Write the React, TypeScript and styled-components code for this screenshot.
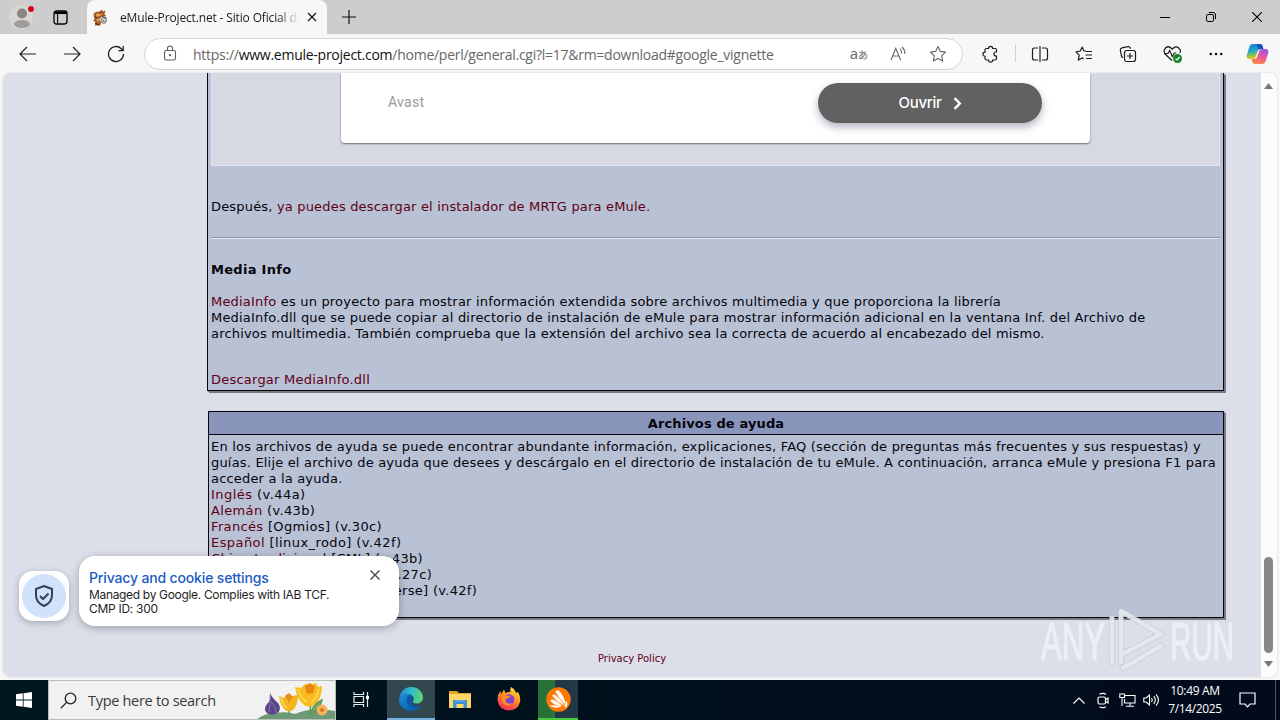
import React from "react";
import styled, { createGlobalStyle } from "styled-components";

const App = () => {
  return (
    <Screen>
      <GlobalStyle />
      <TabBar>
        <Profile>
          <svg width="26" height="26" viewBox="0 0 26 26">
            <circle cx="12" cy="13" r="12" fill="#d8d6d4" />
            <circle cx="13" cy="9.5" r="5" fill="#8b8683" />
            <ellipse cx="13" cy="20" rx="8" ry="4" fill="#a09c9a" />
            <circle cx="22" cy="5" r="3.6" fill="#d9dfe2" />
            <circle cx="22" cy="5" r="3" fill="#d2061c" />
          </svg>
        </Profile>
        <TabActions>
          <svg width="15" height="15" viewBox="0 0 15 15">
            <rect x="1" y="1" width="13" height="13" rx="2.4" fill="none" stroke="#000" strokeWidth="1.3" />
            <path d="M4.6 4v10" stroke="#000" strokeWidth="1.1" />
            <path d="M1.5 1.5h12v2.500h-12z" />
          </svg>
        </TabActions>
        <Tab>
          <svg width="15" height="17" viewBox="0 0 15 17">
            <path d="M1 4l3-1.500 2 .5 3-2.500.5 2 3-1-1 3.500 1.500 2-4.500 1-2.500 3 2 2-.5 3.500L2 16.500l.5-3.500-2-1 1-3-1-2z" fill="#a85a22" />
            <path d="M3 5l4-1 2.500 1-3 2-3 1zM3 10l3-1-1 5z" fill="#e9a45c" />
            <path d="M2 14.500l4 1M8 2.500L6 5M2 8l3 1" stroke="#4c210a" fill="none" />
            <circle cx="10.700" cy="11.500" r="2.800" fill="#d8d5cf" stroke="#6b6763" />
            <path d="M9.500 7.500l4 1.500M9.500 11.500l2 1" stroke="#46392f" fill="none" />
          </svg>
          <TabTitle>eMule-Project.net - Sitio Oficial de</TabTitle>
          <svg width="10" height="10" viewBox="0 0 10 10">
            <path d="M1 1l8 8M9 1L1 9" stroke="#111" strokeWidth="1.2" />
          </svg>
        </Tab>
        <NewTab>
          <svg width="14" height="14" viewBox="0 0 14 14">
            <path d="M7 0v14M0 7h14" stroke="#111" strokeWidth="1.2" />
          </svg>
        </NewTab>
        <WindowButtons>
          <svg width="10" height="10" viewBox="0 0 10 10">
            <path d="M0 5.5h10" stroke="#000" />
          </svg>
          <svg width="10" height="10" viewBox="0 0 10 10" fill="none" stroke="#000">
            <rect x=".5" y="2.5" width="7" height="7" rx="1.4" />
            <path d="M2.8.5H7Q9.500.5 9.500 3v4.200" />
          </svg>
          <svg width="10" height="10" viewBox="0 0 10 10">
            <path d="M0 0l10 10M10 0L0 10" stroke="#000" strokeWidth="1.1" />
          </svg>
        </WindowButtons>
      </TabBar>

      <Toolbar>
        <NavIcons>
          <svg width="18" height="16" viewBox="0 0 18 16" fill="none" stroke="#222" strokeWidth="1.2">
            <path d="M17 8H1.500M8 1L1 8l7 7" />
          </svg>
          <svg width="18" height="16" viewBox="0 0 18 16" fill="none" stroke="#222" strokeWidth="1.2">
            <path d="M1 8h15.500M10 1l7 7-7 7" />
          </svg>
          <svg width="18" height="18" viewBox="0 0 18 18" fill="none" stroke="#222" strokeWidth="1.3">
            <path d="M16.500 9A7.500 7.500 0 1 1 14.300 3.700L16 5.500M16.200 1v4.700h-4.700" />
          </svg>
        </NavIcons>
        <AddressBar>
          <svg width="14" height="17" viewBox="0 0 14 17" fill="none" stroke="#5f5f5f" strokeWidth="1.1">
            <rect x="1.500" y="5.500" width="11" height="9.500" rx="1.800" />
            <path d="M4.500 5.500V3.500a2.500 2.500 0 0 1 5 0v2" />
            <circle cx="7" cy="10.200" r=".6" fill="#5f5f5f" />
          </svg>
          <Url>
            https://<b>www.emule-project.com</b>/home/perl/general.cgi?l=17&amp;rm=download#google_vignette
          </Url>
          <AddressIcons>
            <Translate>
              a<small>あ</small>
            </Translate>
            <svg width="17" height="16" viewBox="0 0 17 16" fill="none" stroke="#666" strokeWidth="1.1">
              <path d="M1 14L5.800 2.500 10.600 14M2.700 10h6.200M10 2.500q1.800 2 1.500 5M12.200 1q3 3 2.700 7" />
            </svg>
            <svg width="18" height="18" viewBox="0 0 18 18" fill="none" stroke="#666" strokeWidth="1.100">
              <path d="M9 1.500l2.300 4.900 5.200.7-3.800 3.700 1 5.300L9 13.500l-4.700 2.600 1-5.300L1.500 7.100l5.200-.7z" strokeLinejoin="round" />
            </svg>
          </AddressIcons>
        </AddressBar>
        <ToolIcons>
          <svg width="18" height="18" viewBox="0 0 18 18" fill="none" stroke="#1c1c1c" strokeWidth="1.200">
            <path d="M3 5Q3 3.500 4.500 3.500H6.500a2.100 2.100 0 1 1 4.200 0H13q1.500 0 1.500 1.500v2H14a2 2 0 1 0 0 4h.5v2.500q0 1.500-1.500 1.500h-2.300a2.100 2.100 0 1 1-4.200 0H4.500Q3 15 3 13.500V11.300a2.100 2.100 0 1 1 0-4.200z" />
          </svg>
          <Separator />
          <svg width="18" height="18" viewBox="0 0 18 18" fill="none" stroke="#1c1c1c" strokeWidth="1.200">
            <path d="M7 3H3.500Q1.500 3 1.500 5v8q0 2 2 2H7M11 3h3.500q2 0 2 2v8q0 2-2 2H11M9 1v16" />
          </svg>
          <svg width="18" height="18" viewBox="0 0 18 18" fill="none" stroke="#1c1c1c" strokeWidth="1.200">
            <path d="M11 6L9 6 7.200 2 5.300 6 1 6.800l3.200 3.300-.8 5 3.800-2.200 1.500.8M11 6.500h6M10.500 10h6.500M11 13.500h6" strokeLinejoin="round" />
          </svg>
          <svg width="18" height="18" viewBox="0 0 18 18" fill="none" stroke="#1c1c1c" strokeWidth="1.200">
            <rect x="5.500" y="5.500" width="11" height="11" rx="2.200" />
            <path d="M11 8v6M8 11h6M4 12.500L2.700 11.800 1.300 5.500q-.3-2 1.600-2.600l6-1.300q1.600-.2 2.300 1.200l.3.900" />
          </svg>
          <svg width="20" height="18" viewBox="0 0 20 18" fill="none" stroke="#1c1c1c" strokeWidth="1.200">
            <path d="M9 15.500L2 9Q0 5.500 2.500 3T8 3l1.200 1.200L10.500 3Q13 .8 15.700 3t1.200 5M1 8.500h4l1.700-3 2.600 6 2-3.500h2" />
            <circle cx="14.500" cy="13.500" r="4.500" fill="#18832a" stroke="none" />
            <path d="M12.500 13.700l1.500 1.300 2.600-3" stroke="#fff" />
          </svg>
          <svg width="14" height="4" viewBox="0 0 14 4">
            <circle cx="1.800" cy="2" r="1.200" />
            <circle cx="7" cy="2" r="1.200" />
            <circle cx="12.200" cy="2" r="1.200" />
          </svg>
        </ToolIcons>
        <Copilot>
          <svg width="23" height="22" viewBox="0 0 23 22">
            <defs>
              <linearGradient id="cpA" x1="0" y1="0" x2="0.200" y2="1">
                <stop offset="0" stopColor="#1279d8" />
                <stop offset=".5" stopColor="#25a6c9" />
                <stop offset=".8" stopColor="#8bc548" />
                <stop offset="1" stopColor="#f2c51c" />
              </linearGradient>
              <linearGradient id="cpB" x1=".7" y1="0" x2=".3" y2="1">
                <stop offset="0" stopColor="#a253e0" />
                <stop offset=".5" stopColor="#ef5796" />
                <stop offset="1" stopColor="#fb8a44" />
              </linearGradient>
            </defs>
            <path d="M7 1h7q2 0 2.600 2l.8 3h-3q-2 0-2.700 2.200L9.700 14Q9 16 7 16H3.500Q0 16 .8 12L3.300 4Q4.200 1 7 1z" fill="url(#cpA)" />
            <path d="M14 1q2 0 2.600 2l.8 3h-3q-1 0-1.800.7L11.300 3Q10.800 1 9.500 1z" fill="#1456b8" />
            <path d="M16 21H9q-2 0-2.600-2l-.8-3H8.500q2 0 2.700-2.200L13.300 8Q14 6 16 6h3.500q3.500 0 2.700 4l-2.500 8q-.9 3-3.700 3z" fill="url(#cpB)" />
          </svg>
        </Copilot>
      </Toolbar>

      <Viewport>
        <Page>
          <Panel>
            <AdSlot>
              <AdCard>
                <Advertiser>Avast</Advertiser>
                <OpenButton>
                  Ouvrir
                  <svg width="9" height="13" viewBox="0 0 9 13" fill="none" stroke="#fff" strokeWidth="2.400">
                    <path d="M1.500 1.200l5.300 5.300-5.300 5.300" />
                  </svg>
                </OpenButton>
              </AdCard>
            </AdSlot>
            <Download $ls={0.18}>
              Después, <a>ya puedes descargar el instalador de MRTG para eMule.</a>
            </Download>
            <Rule />
            <Heading $ls={0.3}>Media Info</Heading>
            <Line $ls={0.195}>
              <a>MediaInfo</a> es un proyecto para mostrar información extendida sobre archivos multimedia y que proporciona la librería
            </Line>
            <Line $ls={0.195}>
              MediaInfo.dll que se puede copiar al directorio de instalación de eMule para mostrar información adicional en la ventana Inf. del Archivo de
            </Line>
            <Line $ls={0.18}>
              archivos multimedia. También comprueba que la extensión del archivo sea la correcta de acuerdo al encabezado del mismo.
            </Line>
            <DllLink $ls={0.23}>
              <a>Descargar MediaInfo.dll</a>
            </DllLink>
          </Panel>

          <HelpPanel>
            <PanelTitle>Archivos de ayuda</PanelTitle>
            <HelpBody>
              <Line $ls={0.2}>
                En los archivos de ayuda se puede encontrar abundante información, explicaciones, FAQ (sección de preguntas más frecuentes y sus respuestas) y
              </Line>
              <Line $ls={0.185}>
                guías. Elije el archivo de ayuda que desees y descárgalo en el directorio de instalación de tu eMule. A continuación, arranca eMule y presiona F1 para
              </Line>
              <Line $ls={0.18}>acceder a la ayuda.</Line>
              {helpFiles.map((file) => (
                <Line key={file.name} $ls={file.spacing}>
                  <a>{file.name}</a> {file.info}
                </Line>
              ))}
            </HelpBody>
          </HelpPanel>
          <Policy>Privacy Policy</Policy>

          <Watermark width="204" height="64" viewBox="0 0 204 64">
            <g fill="#f1f2f7" fillOpacity=".85" stroke="#f1f2f7" strokeOpacity=".8" strokeWidth="1.200" fontFamily="'Liberation Sans Narrow', 'Liberation Sans', sans-serif" fontSize="53">
              <text x="4" y="52" textLength="64" lengthAdjust="spacingAndGlyphs">ANY</text>
              <text x="133" y="52" textLength="64" lengthAdjust="spacingAndGlyphs">RUN</text>
            </g>
            <g fill="none" strokeLinecap="round" strokeLinejoin="round">
              <path d="M75 10v44M84 54V3l39 23M84 17v30l40-21M86 60l38-22" stroke="#b9bdcc" strokeWidth="6" opacity=".6" />
              <path d="M75 10v44M84 54V3l39 23M84 17v30l40-21M86 60l38-22" stroke="#eceef4" strokeWidth="4.500" opacity=".8" />
            </g>
          </Watermark>
        </Page>
        <Scrollbar>
          <svg width="9" height="6" viewBox="0 0 9 6">
            <path d="M4.500 0L9 6H0z" fill="#777" />
          </svg>
          <Thumb />
          <svg width="9" height="6" viewBox="0 0 9 6">
            <path d="M4.500 6L0 0h9z" fill="#777" />
          </svg>
        </Scrollbar>

        <Consent>
          <ShieldButton>
            <span>
              <svg width="20" height="24" viewBox="0 0 20 24" fill="none" stroke="#34434f" strokeWidth="2">
                <path d="M10 2l8 3v6.500Q18 18.500 10 22 2 18.500 2 11.500V5z" />
                <path d="M6 12l3 3 5.500-5.500" />
              </svg>
            </span>
          </ShieldButton>
          <ConsentCard>
            <div>
              <ConsentTitle>Privacy and cookie settings</ConsentTitle>
              <ConsentText $ls={-0.33}>Managed by Google. Complies with IAB TCF.</ConsentText>
              <ConsentText $ls={-0.28}>CMP ID: 300</ConsentText>
            </div>
            <svg width="10" height="10" viewBox="0 0 10 10">
              <path d="M.5.5l9 9M9.500.5l-9 9" stroke="#444" strokeWidth="1.400" />
            </svg>
          </ConsentCard>
        </Consent>
      </Viewport>

      <Taskbar>
        <Start>
          <svg width="16" height="16" viewBox="0 0 16 16" fill="#fff">
            <path d="M0 2.300L6.800 1.300v6.300H0zM7.600 1.200L16 0v7.600H7.600zM0 8.400h6.800v6.300L0 13.700zM7.600 8.400H16V16l-8.400-1.200z" />
          </svg>
        </Start>
        <Search>
          <svg width="17" height="17" viewBox="0 0 17 17" fill="none" stroke="#222" strokeWidth="1.300">
            <circle cx="10.500" cy="6.500" r="5.300" />
            <path d="M6.600 10.400L.8 16.200" />
          </svg>
          <span>Type here to search</span>
          <Flowers width="78" height="38" viewBox="0 0 78 38">
            <path d="M0 38q8-6 18-6 12-2 20 1 16-7 40-3v8z" fill="#6d9a76" />
            <path d="M32 34q0-6-1-10M53 34q0-6 1-12M54 32q2-9 11-13-2 9-11 14z" stroke="#5c9a5a" strokeWidth="1.500" fill="#6fae62" />
            <path d="M13 11q1 5 8 11 5 7-2 11-9 2-11-4 0-5 4-8 2-4 1-10z" fill="#5b4586" />
            <path d="M13 14q1 8-1 17M14 21q5 4 5 11" stroke="#8a72b0" fill="none" />
            <path d="M22 15l5 2 3-4 5 2 6-1q0 10-5 15-5 3-9-1-4-5-5-13z" fill="#f4b41c" />
            <path d="M28 15l4-3 4 4-4 6z" fill="#e98c18" />
            <path d="M38 6l6 1 4-4 5 1 6-2 2 4 4-1q0 12-7 18-5 5-11 1-7-6-9-18z" fill="#f9bc1e" />
            <path d="M48 5l5-3 5 4-2 6-6 1z" fill="#e88614" />
            <path d="M41 8q3 10 9 13M62 8q-2 9-8 14M24 17q2 7 6 10" stroke="#ffda50" strokeWidth="1.600" fill="none" />
            <circle cx="65" cy="29" r="5.500" fill="#f3b25a" />
            <circle cx="65" cy="29" r="2" fill="#d5741e" />
          </Flowers>
        </Search>
        <TaskButton>
          <svg width="17" height="17" viewBox="0 0 17 17" fill="none" stroke="#e8eef0" strokeWidth="1.200">
            <path d="M1 1v2.500h9.500V1M1 16v-2.500h9.500V16M1 5.500h9.500v6H1zM14.500 1v15" />
            <path d="M13 5h3v3h-3z" fill="#fff" stroke="none" />
          </svg>
        </TaskButton>
        <TaskButton $bg="#33474f" $line="#76b0e0" $width={48}>
          <svg width="24" height="24" viewBox="0 0 24 24">
            <defs>
              <linearGradient id="edgeTop" x1="0" y1=".4" x2="1" y2=".5">
                <stop offset="0" stopColor="#2487d5" />
                <stop offset=".5" stopColor="#31bdd0" />
                <stop offset="1" stopColor="#63d56b" />
              </linearGradient>
              <linearGradient id="edgeLow" x1="0" y1="0" x2="1" y2="1">
                <stop offset="0" stopColor="#1a92db" />
                <stop offset="1" stopColor="#0b4f9f" />
              </linearGradient>
            </defs>
            <path d="M.3 11C1 4.500 6 0 12 0c7 0 12 5 12 10.500 0 4-3 6-6.500 6-3 0-4-1.200-3.600-2 .7-1 1-1.700.8-3C14.300 8.500 11 6.500 7.500 7 4 7.200 1.500 9 .3 11z" fill="url(#edgeTop)" />
            <path d="M.2 11.500C1.500 7.500 7.500 5.200 11.500 8 7.500 9 6.700 14 9.500 17.500c3 3.500 8.500 3.500 12.700.8C20 22 16 24 12 24 5 24-.5 18.500.2 11.500z" fill="url(#edgeLow)" />
            <path d="M11.500 8C7 9 6.500 14.500 9.500 18c3 3.300 8.500 3.300 12.700.3-4 1.500-9.500.5-9.900-3.800-.1-1.700 1-2 1.300-3.500.2-1.500-.8-2.500-2.100-3z" fill="#0d59a9" />
          </svg>
        </TaskButton>
        <TaskButton $width={49}>
          <svg width="22" height="19" viewBox="0 0 22 19">
            <path d="M0 1h8l2 2h12v15H0z" fill="#e6a326" />
            <path d="M0 4h22v14H0z" fill="#fbd769" />
            <path d="M4 18v-8h14v8h-3.500v-4h-7v4z" fill="#3e91d1" />
            <path d="M6 11h10" stroke="#78bbe8" />
          </svg>
        </TaskButton>
        <TaskButton $width={49}>
          <svg width="24" height="24" viewBox="0 0 24 24">
            <defs>
              <linearGradient id="fox" x1=".8" y1="0" x2=".3" y2="1">
                <stop offset="0" stopColor="#ffe43a" />
                <stop offset=".45" stopColor="#ff9123" />
                <stop offset="1" stopColor="#f4245c" />
              </linearGradient>
            </defs>
            <path d="M14 0q4 2 5 6l2-1q3 5 2 10-2 8-11 8.500Q2 23 .6 13.500 0 8 3.500 4l.7 3L7 2.500 8.500 6q3-1.500 5-1-.7-3 .5-5z" fill="url(#fox)" />
            <circle cx="12" cy="12.500" r="5.300" fill="#7d45d0" />
            <path d="M5 9q3-2 6 0l3-.3-2.500 2.500Q8 11 8.500 14q1.500 4 6.500 2-2 4-7 2.200Q4 15 5 9z" fill="#ff8b25" />
          </svg>
        </TaskButton>
        <TaskButton $bg="linear-gradient(90deg, #28723a 43%, #233846 43%)" $line="#49c93e" $width={40} $gap={5}>
          <svg width="25" height="25" viewBox="0 0 25 25">
            <circle cx="12.500" cy="12.500" r="12.200" fill="#ff7800" />
            <path
              d="M9.500 4.500q2.500-2 4.500.5 4 5 5.500 12.500Q13 11 9.500 4.500zM6.500 8.800q.5-2 3-.5 5 4 8.500 9.700Q10 14 6.500 8.800zM4.700 14q0-2 2.800-1 4.500 2 8.500 5.700Q7.500 18 4.700 14zM4 18.500q4-.5 10.500 1Q9 22 4 18.500zM18.500 19.500q1.700-2.500 1.700-5.500 2 3 0 6z"
              fill="#fff"
              stroke="#fff"
              strokeWidth=".5"
            />
          </svg>
        </TaskButton>
        <Tray>
          <TrayIcon>
            <svg width="12" height="7" viewBox="0 0 12 7" fill="none" stroke="#fff" strokeWidth="1.200">
              <path d="M.5 6.500L6 1l5.500 5.500" />
            </svg>
          </TrayIcon>
          <TrayIcon>
            <svg width="12" height="17" viewBox="0 0 12 17" fill="none" stroke="#fff" strokeWidth="1.200">
              <rect x="1" y="5" width="7.500" height="7" rx="1.500" />
              <path d="M8.500 7.500L11 6v5L8.500 9.500M2.500 2.300q3-2 6.500 0M2.500 14.700q3 2 6.500 0" />
            </svg>
          </TrayIcon>
          <TrayIcon>
            <svg width="17" height="14" viewBox="0 0 17 14" fill="none" stroke="#fff" strokeWidth="1.100">
              <path d="M6 2.500h10v7.500H5.500V6M11 10v3M7 13.200h8M.8 1h4.700v3.500H.8zM3 4.500V13" />
            </svg>
          </TrayIcon>
          <TrayIcon>
            <svg width="17" height="14" viewBox="0 0 17 14" fill="none" stroke="#fff" strokeWidth="1.100">
              <path d="M.8 5v4h2.400l3.300 3V2L3.200 5zM8.500 5q1.400 2 0 4M10.800 3.200q3 3.800 0 7.600M13 1.300q5 5.700 0 11.400" />
            </svg>
          </TrayIcon>
          <Clock>
            <div>10:49 AM</div>
            <div>7/14/2025</div>
          </Clock>
          <svg width="17" height="16" viewBox="0 0 17 16" fill="none" stroke="#fff" strokeWidth="1.200">
            <path d="M1 1h15v11h-5l-2.500 2.800L6 12H1z" />
          </svg>
        </Tray>
        <DesktopEdge />
      </Taskbar>
    </Screen>
  );
};

export default App;

const helpFiles = [
  { name: "Inglés", info: "(v.44a)", spacing: 0.45 },
  { name: "Alemán", info: "(v.43b)", spacing: 0.35 },
  { name: "Francés", info: "[Ogmios] (v.30c)", spacing: 0.35 },
  { name: "Español", info: "[linux_rodo] (v.42f)", spacing: 0.42 },
  { name: "Chino tradicional", info: "[CML] (v.43b)", spacing: 0.33 },
  { name: "Chino simplificado", info: "[CML] (v.27c)", spacing: 0.35 },
  { name: "Portugués de Brasil", info: "[Multiverse] (v.42f)", spacing: 0.3 },
];

const GlobalStyle = createGlobalStyle`
  * {
    box-sizing: border-box;
  }
  body {
    margin: 0;
    overflow: hidden;
  }
  svg {
    display: block;
    flex: none;
  }
`;

const Screen = styled.div`
  display: flex;
  flex-direction: column;
  width: 1280px;
  height: 720px;
  overflow: hidden;
  background: #f7f7f7;
  font-family: "Open Sans", "Noto Sans", sans-serif;
`;

const TabBar = styled.div`
  display: flex;
  align-items: center;
  height: 34px;
  background: #cdcdcd;
`;

const Profile = styled.div`
  width: 53px;
  padding-left: 9px;
`;

const TabActions = styled.div`
  width: 34px;
`;

const Tab = styled.div`
  display: flex;
  align-items: center;
  align-self: stretch;
  width: 240px;
  padding: 0 10px 0 6px;
  border-radius: 8px 8px 0 0;
  background: #f7f7f7;
`;

const TabTitle = styled.div`
  flex: 1;
  margin: 0 8px 0 12px;
  overflow: hidden;
  color: #1b1b1b;
  font-size: 12px;
  letter-spacing: -0.15px;
  white-space: nowrap;
  mask-image: linear-gradient(90deg, #000 88%, transparent);
`;

const NewTab = styled.div`
  flex: 1;
  padding-left: 15px;
`;

const WindowButtons = styled.div`
  display: flex;
  gap: 36px;
  padding-right: 18px;
`;

const Toolbar = styled.div`
  display: flex;
  align-items: center;
  height: 39px;
  background: #f7f7f7;
`;

const NavIcons = styled.div`
  display: flex;
  align-items: center;
  gap: 26px;
  width: 144px;
  padding-left: 19px;
`;

const AddressBar = styled.div`
  display: flex;
  align-items: center;
  width: 819px;
  height: 32px;
  padding: 0 15px 0 18px;
  border: 1px solid #d6d6d6;
  border-radius: 16px;
  background: #fff;
`;

const Url = styled.div`
  flex: 1;
  margin-left: 16px;
  padding-top: 1px;
  color: #686868;
  font-size: 14px;
  letter-spacing: -0.26px;
  white-space: nowrap;
  b {
    color: #111;
    font-weight: 400;
  }
`;

const AddressIcons = styled.div`
  display: flex;
  align-items: center;
  gap: 22px;
`;

const Translate = styled.div`
  color: #666;
  font-size: 15px;
  line-height: 16px;
  white-space: nowrap;
  small {
    font-family: "Noto Sans CJK JP", sans-serif;
    font-size: 10px;
  }
`;

const ToolIcons = styled.div`
  display: flex;
  align-items: center;
  gap: 26px;
  padding-left: 19px;
`;

const Separator = styled.div`
  width: 1px;
  height: 17px;
  margin: 0 -11px;
  background: #d0d0d0;
`;

const Copilot = styled.div`
  margin-left: auto;
  padding-right: 11px;
`;

const Viewport = styled.div`
  position: relative;
  display: flex;
  width: 1274px;
  height: 604px;
  margin: 0 3px 3px;
  border-radius: 8px;
  overflow: hidden;
  background: #fcfcfc;
  box-shadow: 0 0 2px rgba(0, 0, 0, 0.2);
`;

const Page = styled.div`
  position: relative;
  width: 1258px;
  background: #dcdfe9;
  color: #05050c;
  font-family: "DejaVu Sans", sans-serif;
  font-size: 13px;
  line-height: 16px;
  a {
    color: #600016;
  }
`;

const Panel = styled.div`
  width: 1017px;
  height: 318px;
  margin-left: 204px;
  padding: 0 3px;
  border: 1px solid #05050a;
  border-top: none;
  background: #b9c1d5;
  box-shadow: 1px 1px 0 #7a7a80, 2px 2px 0 #7a7a80;
`;

const AdSlot = styled.div`
  display: flex;
  justify-content: center;
  height: 93px;
  border: 1px solid #dfe4ef;
  border-top: none;
  background: #d6d9e2;
`;

const AdCard = styled.div`
  display: flex;
  justify-content: space-between;
  width: 749px;
  height: 70px;
  padding: 10px 48px 0 47px;
  border-radius: 0 0 4px 4px;
  background: #fff;
  box-shadow: 0 1px 2px rgba(0, 0, 0, 0.5);
`;

const Advertiser = styled.div`
  color: #9a9a9a;
  font-family: Roboto, sans-serif;
  font-size: 14px;
  letter-spacing: 0.3px;
  line-height: 38px;
`;

const OpenButton = styled.div`
  display: flex;
  align-items: center;
  justify-content: center;
  gap: 11px;
  width: 224px;
  height: 40px;
  border-radius: 20px;
  background: #616161;
  box-shadow: 0 4px 9px rgba(70, 60, 100, 0.4);
  color: #fff;
  font-family: Inter, sans-serif;
  font-size: 15px;
  font-weight: 500;
  letter-spacing: -0.25px;
`;

const Line = styled.div<{ $ls: number }>`
  height: 16px;
  letter-spacing: ${({ $ls }) => $ls}px;
  white-space: nowrap;
`;

const Download = styled(Line)`
  margin-top: 33px;
`;

const Rule = styled.div`
  height: 2px;
  margin-top: 22px;
  border-top: 1px solid #8f94a4;
  background: #e6e9f1;
`;

const Heading = styled(Line)`
  margin: 23px 0 16px;
  font-weight: 700;
`;

const DllLink = styled(Line)`
  margin-top: 30px;
`;

const HelpPanel = styled.div`
  width: 1016px;
  height: 207px;
  margin: 20px 0 0 205px;
  border: 1px solid #05050a;
  background: #b9c1d5;
  box-shadow: 1px 1px 0 #7a7a80, 2px 2px 0 #7a7a80;
`;

const PanelTitle = styled.div`
  height: 23px;
  border-bottom: 1px solid #05050a;
  background: #8a95bb;
  font-weight: 700;
  letter-spacing: 0.12px;
  line-height: 23px;
  text-align: center;
`;

const HelpBody = styled.div`
  padding: 4px 2px;
`;

const Policy = styled.div`
  margin-top: 33px;
  color: #600016;
  font-size: 10px;
  text-align: center;
`;

const Watermark = styled.svg`
  position: absolute;
  left: 1034px;
  top: 535px;
`;

const Scrollbar = styled.div`
  display: flex;
  flex: 1;
  flex-direction: column;
  align-items: center;
  padding: 10px 1px 10px 0;
`;

const Thumb = styled.div`
  width: 9px;
  height: 96px;
  margin: auto 0 8px;
  border-radius: 5px;
  background: #868686;
`;

const Consent = styled.div`
  position: absolute;
  left: 16px;
  bottom: 51px;
  display: flex;
  align-items: flex-end;
  gap: 10px;
  font-family: Inter, sans-serif;
`;

const ShieldButton = styled.div`
  display: flex;
  align-items: center;
  justify-content: center;
  width: 50px;
  height: 50px;
  margin-bottom: 5px;
  border-radius: 14px;
  background: #fff;
  box-shadow: 0 2px 7px rgba(0, 0, 0, 0.25);
  span {
    display: flex;
    align-items: center;
    justify-content: center;
    width: 44px;
    height: 44px;
    border-radius: 50%;
    background: #cfe1fb;
  }
`;

const ConsentCard = styled.div`
  display: flex;
  justify-content: space-between;
  width: 320px;
  height: 70px;
  padding: 14px 19px 0 10px;
  border-radius: 16px;
  background: #fff;
  box-shadow: 0 2px 8px rgba(0, 0, 0, 0.28);
`;

const ConsentTitle = styled.div`
  margin-bottom: 3px;
  color: #1a5bc4;
  font-size: 14px;
  font-weight: 500;
  letter-spacing: -0.15px;
  line-height: 15px;
`;

const ConsentText = styled.div<{ $ls: number }>`
  color: #1f1f1f;
  font-size: 12px;
  letter-spacing: ${({ $ls }) => $ls}px;
  line-height: 14px;
  white-space: nowrap;
`;

const Taskbar = styled.div`
  display: flex;
  height: 40px;
  background: linear-gradient(90deg, #00171f, #00101c 50%, #020a1c);
`;

const Start = styled.div`
  display: flex;
  align-items: center;
  width: 48px;
  padding-left: 16px;
`;

const Search = styled.div`
  position: relative;
  display: flex;
  align-items: center;
  gap: 11px;
  width: 288px;
  padding-left: 11px;
  border: 1px solid #bcbcbc;
  background: #f1f1f1;
  color: #3a3a3a;
  font-size: 14.5px;
  letter-spacing: -0.3px;
`;

const Flowers = styled.svg`
  position: absolute;
  right: 0;
  top: 0;
`;

const TaskButton = styled.div<{ $bg?: string; $line?: string; $width?: number; $gap?: number }>`
  display: flex;
  align-items: center;
  justify-content: center;
  width: ${({ $width }) => $width ?? 51}px;
  margin-left: ${({ $gap }) => $gap ?? 0}px;
  border-bottom: 2px solid ${({ $line }) => $line ?? "transparent"};
  background: ${({ $bg }) => $bg ?? "none"};
`;

const Tray = styled.div`
  display: flex;
  align-items: center;
  margin-left: auto;
  padding-right: 19px;
`;

const TrayIcon = styled.div`
  display: flex;
  justify-content: center;
  width: 24px;
`;

const Clock = styled.div`
  width: 64px;
  margin-right: 12px;
  color: #fff;
  font-size: 12px;
  letter-spacing: -0.35px;
  line-height: 18px;
  text-align: center;
`;

const DesktopEdge = styled.div`
  width: 5px;
  border-left: 1px solid #4a5560;
`;
